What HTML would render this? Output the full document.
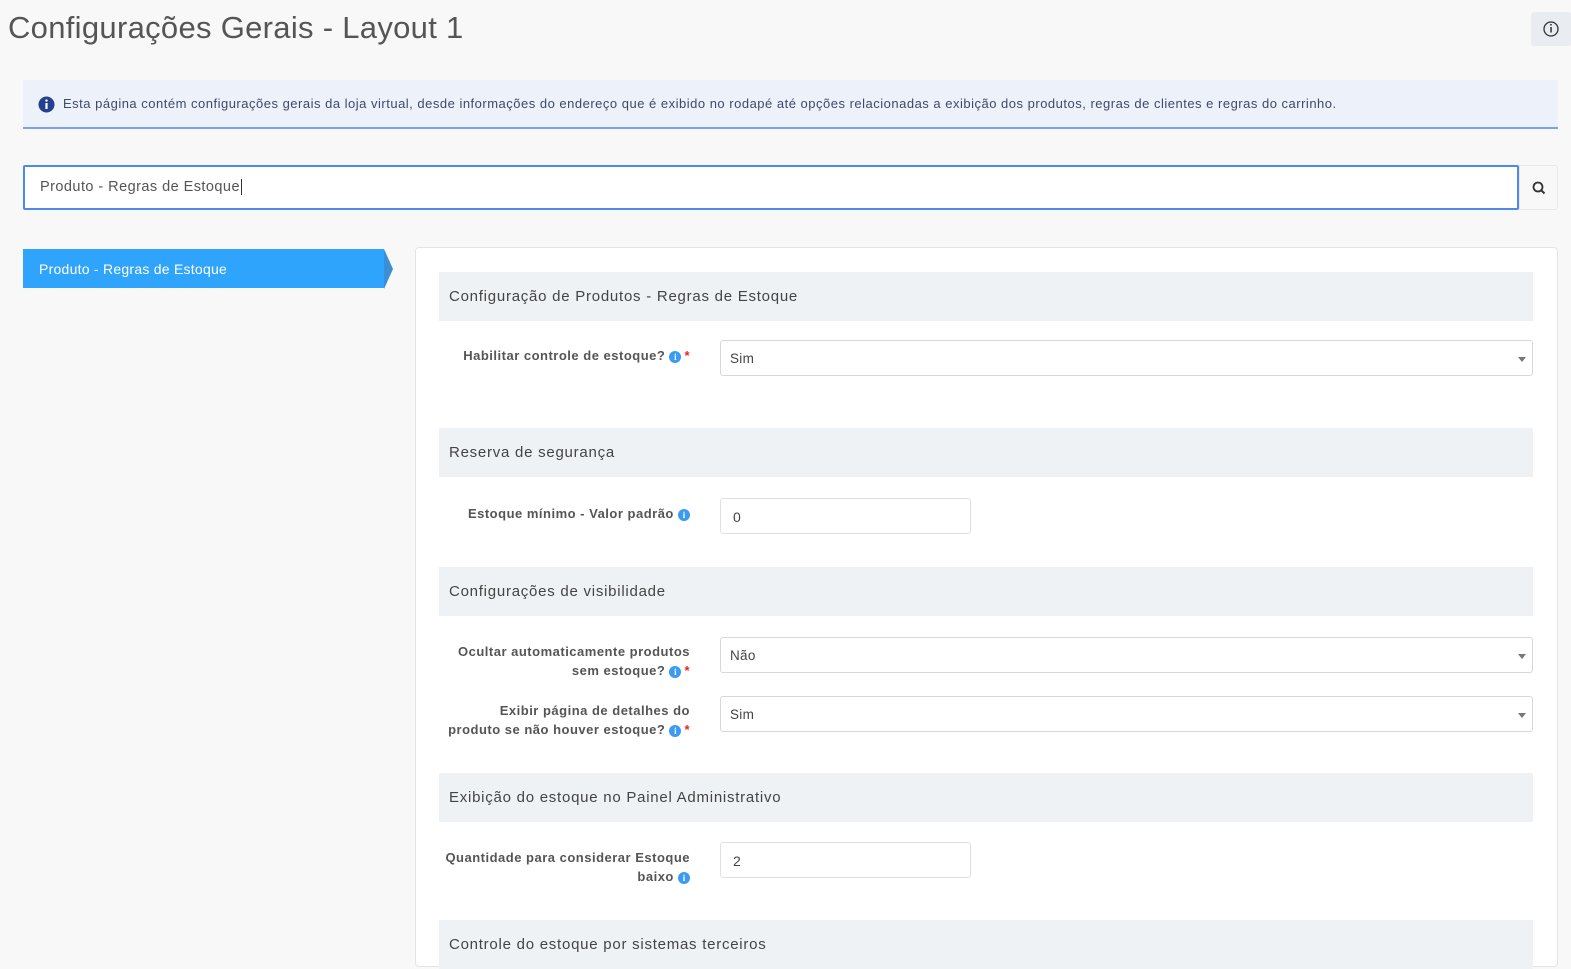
<!DOCTYPE html>
<html><head><meta charset="utf-8"><style>
*{box-sizing:border-box;margin:0;padding:0}
body{width:1571px;height:951px;overflow:hidden;background:#f8f8f8;font-family:"Liberation Sans",sans-serif;position:relative;color:#444}
.a{position:absolute}
.title{left:8px;top:10px;font-size:31px;color:#555;letter-spacing:0.3px}
.ib{left:1531px;top:12px;width:40px;height:34px;background:#e9ecf1;border-radius:3px}
.info{left:23px;top:80px;width:1535px;height:49px;background:#edf1f9;border-bottom:2px solid #7fa0e8}
.info span{position:absolute;left:40px;top:16px;font-size:13px;color:#3f4a6a;letter-spacing:0.5px;white-space:nowrap}
.search{left:23px;top:165px;width:1496px;height:45px;background:#fff;border:2px solid #4d8af0;border-radius:2px}
.search span{position:absolute;left:15px;top:12px;font-size:14.5px;color:#555;letter-spacing:0.45px}
.sbtn{left:1519px;top:165px;width:39px;height:45px;background:#f8f8f8;border:1px solid #e8e8e8;border-radius:0 3px 3px 0}
.tab{left:23px;top:249px;width:361px;height:39px;background:#2fa4fc;color:#fff;font-size:14px;padding:12px 16px;letter-spacing:0.25px}
.panel{left:415px;top:247px;width:1143px;height:720px;background:#fff;border:1px solid #e4e4e4;border-radius:4px}
.sec{left:439px;width:1094px;height:49px;background:#eff2f5;font-size:15px;color:#444;padding:16px 10px;letter-spacing:0.75px;white-space:nowrap}
.lbl{width:250px;left:440px;text-align:right;font-size:13px;font-weight:bold;color:#555;line-height:18.5px;letter-spacing:0.5px}
.i{display:inline-block;width:12px;height:12px;border-radius:50%;background:#3a9cf0;color:#fff;font-size:9px;line-height:12px;text-align:center;font-weight:bold;vertical-align:0px;font-family:"Liberation Serif",serif;letter-spacing:0}
.r{color:#e22;margin-left:3px}
.sel{left:720px;width:813px;height:36px;background:#fff;border:1px solid #d8d8d8;border-radius:3px;font-size:13.5px;padding:10px 9px;color:#444;letter-spacing:0.3px}
.sel:after{content:"";position:absolute;right:6px;top:16px;border:4px solid transparent;border-top:5px solid #777}
.inp{left:720px;width:251px;height:36px;background:#fff;border:1px solid #e0e0e0;border-radius:3px;font-size:14px;padding:10px 12px;color:#444}
</style></head><body>
<div class="a title">Configurações Gerais - Layout 1</div>
<div class="a ib"><svg width="40" height="34"><circle cx="20" cy="17" r="7" fill="none" stroke="#333" stroke-width="1.3"/><rect x="19.3" y="15" width="1.5" height="5.5" fill="#333"/><circle cx="20" cy="12.8" r="0.9" fill="#333"/></svg></div>
<div class="a info"><svg class="a" style="left:15px;top:16px" width="17" height="17"><circle cx="8.5" cy="8.5" r="8" fill="#24408e"/><rect x="7.4" y="7" width="2.2" height="6" fill="#fff"/><circle cx="8.5" cy="4.6" r="1.2" fill="#fff"/></svg><span>Esta página contém configurações gerais da loja virtual, desde informações do endereço que é exibido no rodapé até opções relacionadas a exibição dos produtos, regras de clientes e regras do carrinho.</span></div>
<div class="a search"><span>Produto - Regras de Estoque<span style="position:static;border-left:1px solid #333;margin-left:1px"></span></span></div>
<div class="a sbtn"><svg width="39" height="45"><circle cx="18" cy="21" r="4.5" fill="none" stroke="#333" stroke-width="1.8"/><line x1="21.3" y1="24.3" x2="24.5" y2="27.5" stroke="#333" stroke-width="2"/></svg></div>
<div class="a tab">Produto - Regras de Estoque</div>
<svg class="a" style="left:384px;top:249px" width="10" height="40"><polygon points="0,0 0,40 9,20" fill="#3b8fd4"/></svg>
<div class="a panel"></div>
<div class="a sec" style="top:272px">Configuração de Produtos - Regras de Estoque</div>
<div class="a lbl" style="top:347px">Habilitar controle de estoque? <span class="i">i</span><span class="r">*</span></div>
<div class="a sel" style="top:340px">Sim</div>
<div class="a sec" style="top:428px">Reserva de segurança</div>
<div class="a lbl" style="top:505px">Estoque mínimo - Valor padrão <span class="i">i</span></div>
<div class="a inp" style="top:498px">0</div>
<div class="a sec" style="top:567px">Configurações de visibilidade</div>
<div class="a lbl" style="top:643px">Ocultar automaticamente produtos<br>sem estoque? <span class="i">i</span><span class="r">*</span></div>
<div class="a sel" style="top:637px">Não</div>
<div class="a lbl" style="top:702px;left:410px;width:280px">Exibir página de detalhes do<br>produto se não houver estoque? <span class="i">i</span><span class="r">*</span></div>
<div class="a sel" style="top:696px">Sim</div>
<div class="a sec" style="top:773px">Exibição do estoque no Painel Administrativo</div>
<div class="a lbl" style="top:849px;left:420px;width:270px">Quantidade para considerar Estoque<br>baixo <span class="i">i</span></div>
<div class="a inp" style="top:842px">2</div>
<div class="a sec" style="top:920px">Controle do estoque por sistemas terceiros</div>
</body></html>
